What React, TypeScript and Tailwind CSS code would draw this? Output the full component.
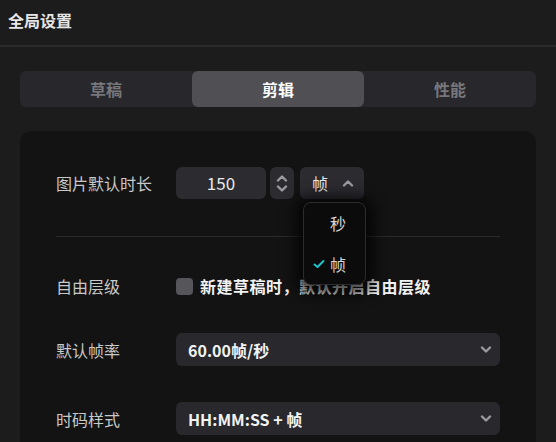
import React, { useState } from 'react';

const font = { fontFamily: '"Noto Sans CJK SC", "Noto Sans", sans-serif' };

function Chevron({ up = false }: { up?: boolean }) {
  return (
    <svg width="12" height="8" viewBox="0 0 12 8" className="text-[#9a9aa0]">
      <path
        d={up ? 'M2 6.5 L6 2.5 L10 6.5' : 'M2 1.5 L6 5.5 L10 1.5'}
        fill="none"
        stroke="currentColor"
        strokeWidth="2.4"
        strokeLinecap="round"
        strokeLinejoin="round"
      />
    </svg>
  );
}

function Select({ value }: { value: string }) {
  return (
    <div className="flex h-[33px] w-[324px] items-center justify-between rounded-md bg-[#28282d] pl-3 pr-2">
      <span className="text-[16px] font-bold text-[#f2f2f2]">{value}</span>
      <Chevron />
    </div>
  );
}

export default function App() {
  const [tab, setTab] = useState('剪辑');
  const tabs = ['草稿', '剪辑', '性能'];

  return (
    <div style={font} className="h-[442px] w-[556px] overflow-hidden bg-[#1c1c1d]">
      {/* Header */}
      <div className="flex h-[47px] items-center border-b-2 border-[#2a2a2b] px-2 pb-[6px]">
        <span className="text-[16px] font-bold text-[#e6e6e6]">全局设置</span>
      </div>

      <div className="px-5 pt-6">
        {/* Tabs */}
        <div className="grid h-[36px] grid-cols-3 rounded-md bg-[#28282c]">
          {tabs.map(t => (
            <button
              key={t}
              onClick={() => setTab(t)}
              className={`rounded-md text-[16px] font-bold ${
                tab === t ? 'bg-[#4f4f54] text-white' : 'text-[#77777b]'
              }`}
            >
              {t}
            </button>
          ))}
        </div>

        {/* Panel */}
        <div className="mt-6 h-[320px] rounded-xl bg-[#131313] px-9 pt-9">
          <div className="flex items-center">
            <span className="w-[120px] text-[16px] text-[#c9c9c9]">图片默认时长</span>
            <div className="flex h-[32px] w-[90px] items-center justify-center rounded-md bg-[#2b2b30] text-[17px] text-[#e8e8e8]">
              150
            </div>
            <div className="ml-1 flex h-[32px] w-[24px] flex-col items-center justify-center gap-[3px] rounded-md bg-[#2b2b30]">
              <Chevron up />
              <Chevron />
            </div>
            <div className="relative ml-[6px]">
              <div className="flex h-[32px] w-[64px] items-center justify-between rounded-md bg-[#2b2b30] pl-3 pr-[10px]">
                <span className="text-[16px] text-[#e8e8e8]">帧</span>
                <Chevron up />
              </div>
              <div className="absolute left-[3px] top-[35px] z-10 flex h-[83px] w-[63px] flex-col rounded-lg border border-[#2c2c2e] bg-[#0b0b0b] shadow-[0_2px_14px_8px_rgba(0,0,0,0.7)]">
                <div className="flex h-[41px] items-center pl-[26px] text-[16px] text-[#d8d8d8]">秒</div>
                <div className="flex h-[41px] items-center pl-[9px] text-[16px] text-[#d8d8d8]">
                  <svg width="12" height="10" viewBox="0 0 12 10" className="mr-[5px]">
                    <path d="M1.5 5.5 L4.5 8 L10.5 2" fill="none" stroke="#1fc2c9" strokeWidth="2" strokeLinecap="round" strokeLinejoin="round" />
                  </svg>
                  帧
                </div>
              </div>
            </div>
          </div>

          <div className="mt-[37px] h-px bg-[#2a2a2b]" />

          <div className="mt-[37px] flex items-center">
            <span className="w-[120px] text-[16px] text-[#c9c9c9]">自由层级</span>
            <div className="h-[17px] w-[17px] rounded bg-[#55555a]" />
            <span className="ml-[7px] text-[16px] font-bold tracking-[0.5px] text-[#f2f2f2]">新建草稿时，默认开启自由层级</span>
          </div>

          <div className="mt-[35px] flex items-center">
            <span className="w-[120px] text-[16px] text-[#c9c9c9]">默认帧率</span>
            <Select value="60.00帧/秒" />
          </div>

          <div className="mt-[36px] flex items-center">
            <span className="w-[120px] text-[16px] text-[#c9c9c9]">时码样式</span>
            <Select value="HH:MM:SS + 帧" />
          </div>
        </div>
      </div>
    </div>
  );
}
